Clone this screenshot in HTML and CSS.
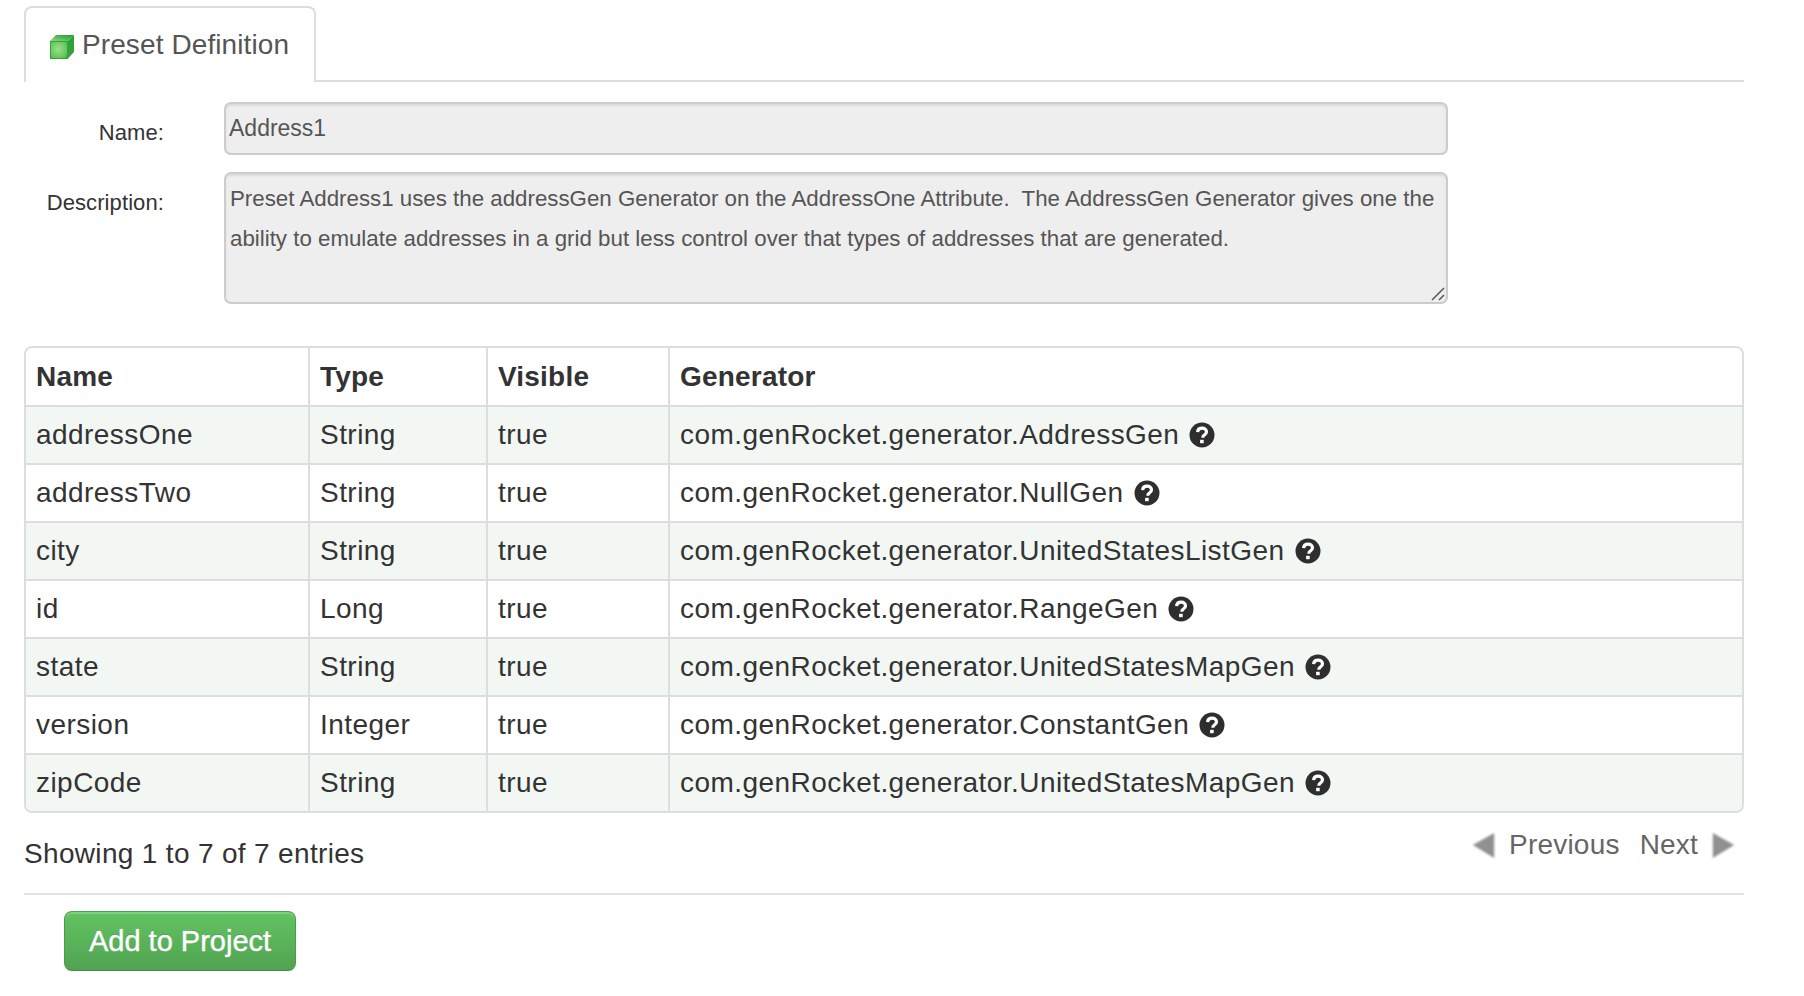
FILE: index.html
```html
<!DOCTYPE html>
<html lang="en">
<head>
<meta charset="utf-8">
<title>Preset Definition</title>
<link rel="stylesheet" href="styles.css">
</head>
<body>
<main class="page">
  <div class="tabs">
    <div class="tab">
      <svg class="cube" viewBox="0 0 24 24" width="24" height="24" aria-hidden="true">
        <defs>
          <radialGradient id="cf" cx="45%" cy="45%" r="75%"><stop offset="0" stop-color="#9be08c"/><stop offset=".7" stop-color="#62c558"/><stop offset="1" stop-color="#2f9e36"/></radialGradient>
          <linearGradient id="ct" x1="0" y1="1" x2="1" y2="0"><stop offset="0" stop-color="#8edb80"/><stop offset="1" stop-color="#1f9a33"/></linearGradient>
          <linearGradient id="cs" x1="0" y1="0" x2="0" y2="1"><stop offset="0" stop-color="#27a238"/><stop offset="1" stop-color="#3f9f3f"/></linearGradient>
        </defs>
        <polygon points="0,6 6,0 24,0 18,6" fill="url(#ct)"/>
        <polygon points="18,6 24,0 24,17 17.500,24" fill="url(#cs)"/>
        <rect x="0" y="6" width="18" height="18" fill="url(#cf)"/>
        <rect x="0.500" y="6.500" width="17" height="17" fill="none" stroke="#35a23c" stroke-width="1"/>
      </svg>
      <span>Preset Definition</span>
    </div>
  </div>

  <form class="form">
    <label class="form-label name-label" for="name">Name:</label>
    <input class="field name-field" id="name" type="text" value="Address1" disabled>
    <label class="form-label desc-label" for="desc">Description:</label>
    <div class="desc-box">
      <textarea class="field desc-field" id="desc" disabled>Preset Address1 uses the addressGen Generator on the AddressOne Attribute.  The AddressGen Generator gives one the ability to emulate addresses in a grid but less control over that types of addresses that are generated.</textarea>
      <svg class="grip" viewBox="0 0 16 16" aria-hidden="true">
        <path d="M2 14 14 2M9 14l5-5" fill="none" stroke="#555" stroke-width="1.500"/>
      </svg>
    </div>
  </form>

  <div class="table-wrap">
    <table class="grid">
      <colgroup><col class="c1"><col class="c2"><col class="c3"><col></colgroup>
      <thead>
        <tr><th>Name</th><th>Type</th><th>Visible</th><th>Generator</th></tr>
      </thead>
      <tbody>
        <tr><td>addressOne</td><td>String</td><td>true</td><td><span class="gen">com.genRocket.generator.AddressGen<svg class="help" viewBox="0 0 26 26" aria-hidden="true"><use href="#q"/></svg></span></td></tr>
        <tr><td>addressTwo</td><td>String</td><td>true</td><td><span class="gen">com.genRocket.generator.NullGen<svg class="help" viewBox="0 0 26 26" aria-hidden="true"><use href="#q"/></svg></span></td></tr>
        <tr><td>city</td><td>String</td><td>true</td><td><span class="gen">com.genRocket.generator.UnitedStatesListGen<svg class="help" viewBox="0 0 26 26" aria-hidden="true"><use href="#q"/></svg></span></td></tr>
        <tr><td>id</td><td>Long</td><td>true</td><td><span class="gen">com.genRocket.generator.RangeGen<svg class="help" viewBox="0 0 26 26" aria-hidden="true"><use href="#q"/></svg></span></td></tr>
        <tr><td>state</td><td>String</td><td>true</td><td><span class="gen">com.genRocket.generator.UnitedStatesMapGen<svg class="help" viewBox="0 0 26 26" aria-hidden="true"><use href="#q"/></svg></span></td></tr>
        <tr><td>version</td><td>Integer</td><td>true</td><td><span class="gen">com.genRocket.generator.ConstantGen<svg class="help" viewBox="0 0 26 26" aria-hidden="true"><use href="#q"/></svg></span></td></tr>
        <tr><td>zipCode</td><td>String</td><td>true</td><td><span class="gen">com.genRocket.generator.UnitedStatesMapGen<svg class="help" viewBox="0 0 26 26" aria-hidden="true"><use href="#q"/></svg></span></td></tr>
      </tbody>
    </table>
  </div>

  <div class="footer">
    <div class="info">Showing 1 to 7 of 7 entries</div>
    <div class="pager">
      <span class="page-link"><svg class="arrow" viewBox="0 0 28 32" aria-hidden="true"><polygon points="2,15 25,2 25,29" fill="#909090" filter="url(#soft)"/></svg>Previous</span>
      <span class="page-link">Next<svg class="arrow" viewBox="0 0 28 32" aria-hidden="true"><polygon points="3,2 26,15 3,29" fill="#909090" filter="url(#soft)"/></svg></span>
    </div>
  </div>

  <div class="actions">
    <button class="btn" type="button">Add to Project</button>
  </div>
</main>

<svg class="defs" width="0" height="0" aria-hidden="true">
  <defs>
    <filter id="soft" x="-30%" y="-30%" width="160%" height="170%">
      <feGaussianBlur stdDeviation="1.200"/>
      <feOffset dy="1"/>
    </filter>
    <g id="q">
      <circle cx="13" cy="13" r="12.500" fill="#2e2e2e"/>
      <path d="M8.600 10.200c.2-2.600 2-4 4.600-4 2.500 0 4.300 1.400 4.300 3.500 0 1.600-.9 2.500-2.100 3.300-1.100.7-1.500 1.200-1.500 2.300v.4" fill="none" stroke="#fff" stroke-width="3.200"/>
      <rect x="11.100" y="17.800" width="3.600" height="3.400" fill="#fff"/>
    </g>
  </defs>
</svg>
</body>
</html>
```

FILE: styles.css
```css
* { box-sizing: border-box; }

html, body {
  margin: 0;
  background: #fff;
}

body {
  font-family: "Liberation Sans", Arial, sans-serif;
  color: #333;
}

.page {
  width: 1744px;
  padding: 6px 0 0 24px;
}

.tabs {
  display: flex;
  border-bottom: 2px solid #ddd;
  height: 76px;
}

.tab {
  display: flex;
  align-items: center;
  gap: 8px;
  height: 76px;
  padding: 0 25px 0 24px;
  background: #fff;
  border: 2px solid #ddd;
  border-bottom: 0;
  border-radius: 8px 8px 0 0;
  font-size: 28px;
  letter-spacing: .1px;
  color: #555;
}

.cube {
  flex: none;
  margin-top: 4px;
}

.form {
  display: grid;
  grid-template-columns: 140px 1224px;
  column-gap: 60px;
  row-gap: 17px;
  padding-top: 20px;
}

.form-label {
  font-size: 22px;
  letter-spacing: .1px;
  text-align: right;
  color: #333;
}

.name-label { padding-top: 18px; }
.desc-label { padding-top: 18px; }

.field {
  display: block;
  width: 100%;
  padding: 0 3px;
  background: #eee;
  border: 2px solid #ccc;
  border-radius: 7px;
  font-family: "Liberation Sans", Arial, sans-serif;
  font-size: 23px;
  color: #555;
  box-shadow: inset 0 2px 2px rgba(0, 0, 0, .08);
  opacity: 1;
  -webkit-text-fill-color: #555;
}

.name-field {
  height: 53px;
}

.desc-box {
  position: relative;
}

.desc-field {
  height: 132px;
  padding: 5px 4px;
  font-size: 22.3px;
  line-height: 40px;
  resize: none;
}

.grip {
  position: absolute;
  right: 2px;
  bottom: 2px;
  width: 16px;
  height: 16px;
}

.table-wrap {
  margin-top: 42px;
  border: 2px solid #ddd;
  border-radius: 8px;
  overflow: hidden;
}

.grid {
  width: 100%;
  table-layout: fixed;
  border-collapse: separate;
  border-spacing: 0;
  font-size: 28px;
  letter-spacing: .45px;
}

.c1 { width: 282px; }
.c2 { width: 178px; }
.c3 { width: 182px; }

.grid th,
.grid td {
  height: 58px;
  padding: 0 10px;
  text-align: left;
  vertical-align: middle;
  border-left: 2px solid #ddd;
  border-top: 2px solid #ddd;
  white-space: nowrap;
}

.grid th {
  height: 57px;
  border-top: 0;
  font-weight: bold;
  letter-spacing: .2px;
}

.grid th:first-child,
.grid td:first-child {
  border-left: 0;
}

.grid tbody tr:nth-child(odd) td {
  background: #f2f7f4;
}

.gen {
  display: inline-flex;
  align-items: center;
  gap: 10px;
}

.help {
  width: 26px;
  height: 26px;
  flex: none;
}

.footer {
  display: flex;
  justify-content: space-between;
  align-items: flex-start;
  height: 82px;
  border-bottom: 2px solid #e2e2e2;
}

.info {
  padding-top: 25px;
  font-size: 28px;
  letter-spacing: .33px;
  color: #333;
}

.pager {
  display: flex;
  gap: 20px;
  padding: 16px 8px 0 0;
  font-size: 28px;
  letter-spacing: .2px;
  color: #666;
}

.page-link {
  display: inline-flex;
  align-items: center;
  gap: 12px;
}

.arrow {
  width: 26px;
  height: 30px;
  flex: none;
}

.actions {
  padding: 16px 0 0 40px;
}

.btn {
  width: 232px;
  height: 60px;
  padding: 0;
  font-family: "Liberation Sans", Arial, sans-serif;
  font-size: 29px;
  color: #fff;
  -webkit-text-stroke: .4px #fff;
  text-shadow: 0 -1px 0 rgba(0, 0, 0, .25);
  background: linear-gradient(#62c462, #51a351);
  border: 1px solid #4c9a4c;
  border-top-color: #4f9f4f;
  border-bottom-color: #458a45;
  border-radius: 8px;
  box-shadow: inset 0 2px 0 rgba(255, 255, 255, .2), 0 1px 2px rgba(0, 0, 0, .05);
}

.defs {
  position: absolute;
}
```
